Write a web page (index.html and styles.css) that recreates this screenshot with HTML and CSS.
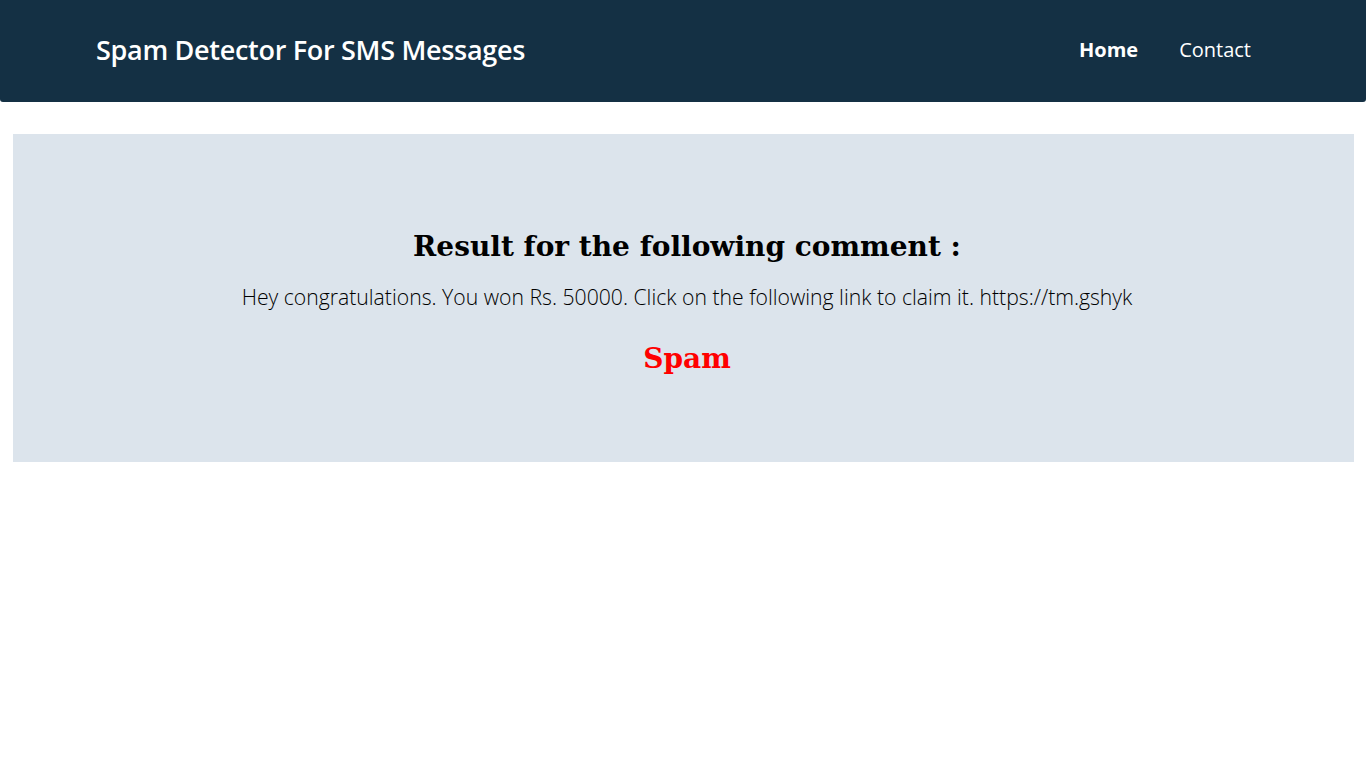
FILE: index.html
```html
<!DOCTYPE html>
<html lang="en">
<head>
<meta charset="utf-8">
<title>Spam Detector For SMS Messages</title>
<link rel="stylesheet" href="styles.css">
</head>
<body>
<header class="navbar">
  <div class="brand">Spam Detector For SMS Messages</div>
  <nav class="nav-links">
    <a class="nav-link active" href="#">Home</a>
    <a class="nav-link" href="#">Contact</a>
  </nav>
</header>
<main class="result-card">
  <h2 class="result-title">Result for the following comment :</h2>
  <p class="comment">Hey congratulations. You won Rs. 50000. Click on the following link to claim it. https://tm.gshyk</p>
  <h2 class="verdict">Spam</h2>
</main>
</body>
</html>
```
FILE: styles.css
```css
html, body {
  margin: 0;
  padding: 0;
  background: #ffffff;
}
body {
  font-family: "Open Sans", "Noto Sans", sans-serif;
}
.navbar {
  height: 102px;
  background: #143044;
  border-radius: 0 0 3px 3px;
  display: flex;
  align-items: center;
  justify-content: space-between;
  padding: 0 115px 3px 96px;
  box-sizing: border-box;
}
.brand {
  color: #ffffff;
  font-size: 27px;
  font-weight: 600;
  letter-spacing: -0.3px;
}
.nav-links {
  display: flex;
  gap: 41px;
}
.nav-link {
  color: #ffffff;
  text-decoration: none;
  font-size: 20px;
  font-weight: 400;
}
.nav-link.active {
  font-weight: 700;
}
.result-card {
  margin: 32px 12px 0 13px;
  height: 328px;
  box-sizing: border-box;
  padding: 93px 0 0 7px;
  background: #dce4ec;
  text-align: center;
}
.result-title {
  margin: 0;
  font-family: "DejaVu Serif", serif;
  font-weight: 700;
  font-size: 28px;
  line-height: 40px;
  color: #000;
}
.comment {
  margin: 15px 0 0;
  font-size: 21.2px;
  line-height: 30px;
  font-weight: 300;
  color: #000;
}
.verdict {
  margin: 27px 0 0;
  font-family: "DejaVu Serif", serif;
  font-weight: 700;
  font-size: 28px;
  line-height: 40px;
  color: #ff0000;
}
```
